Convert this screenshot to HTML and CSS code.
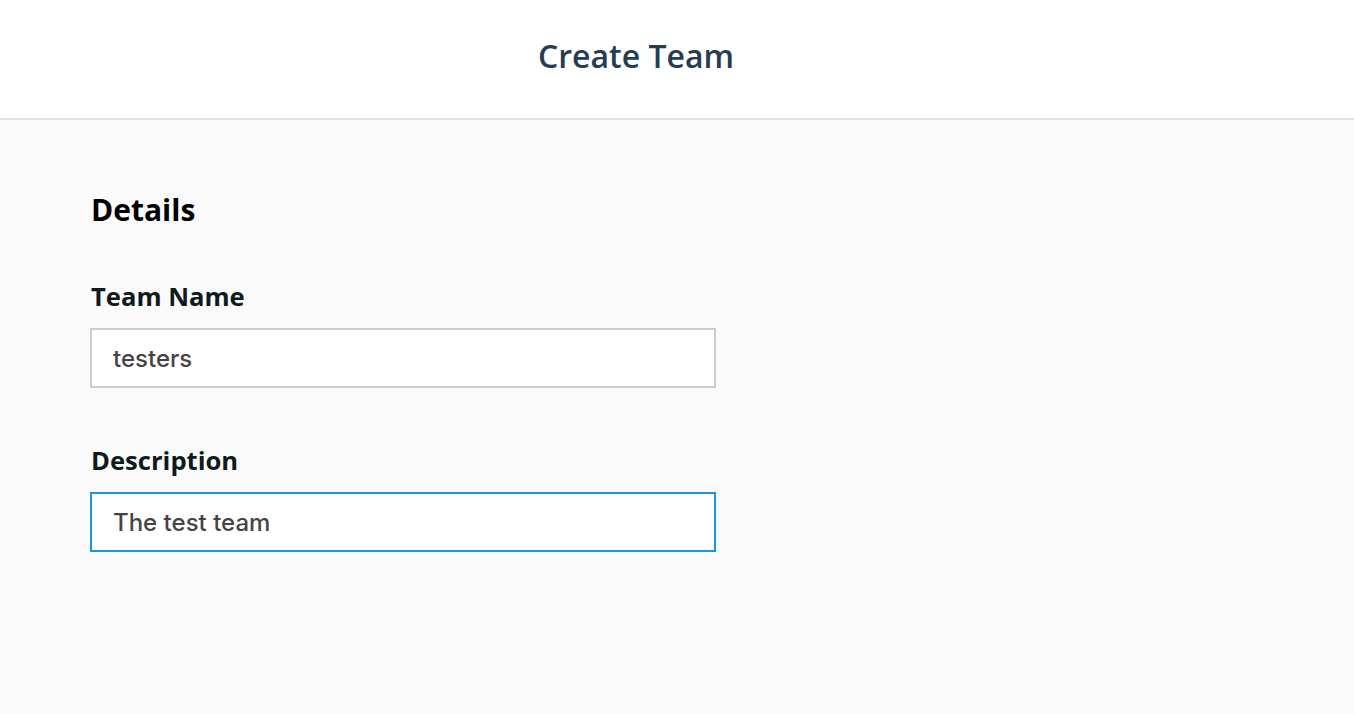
FILE: index.html
```html
<!DOCTYPE html>
<html>
<head>
<meta charset="utf-8">
<link rel="stylesheet" href="styles.css">
</head>
<body>
<header class="topbar">
  <h1 class="title">Create Team</h1>
</header>
<main class="content">
  <h2 class="section-title">Details</h2>
  <div class="field">
    <label class="label">Team Name</label>
    <div class="input">testers</div>
  </div>
  <div class="field">
    <label class="label">Description</label>
    <div class="input input-focus">The test team</div>
  </div>
</main>
</body>
</html>
```

FILE: styles.css
```css
html, body {
  margin: 0;
  padding: 0;
  height: 100%;
}
body {
  background: #fafafa;
  font-family: "Open Sans", sans-serif;
}
.topbar {
  height: 118px;
  background: #ffffff;
  border-bottom: 2px solid #e2e2e4;
  display: flex;
  align-items: center;
  justify-content: center;
  padding-right: 82px;
}
.title {
  margin: 0;
  font-size: 32px;
  font-weight: 600;
  color: #263c52;
  line-height: 40px;
  padding-bottom: 6px;
}
.content {
  padding: 0 90px;
  display: flex;
  flex-direction: column;
}
.section-title {
  margin: 70px 0 0 1px;
  font-size: 30px;
  font-weight: 700;
  color: #000;
  line-height: 40px;
}
.field {
  display: flex;
  flex-direction: column;
  margin-top: 49px;
}
.field + .field {
  margin-top: 55px;
}
.label {
  font-size: 25.6px;
  font-weight: 700;
  color: #0f1a1e;
  line-height: 36px;
  margin-left: 1px;
}
.input {
  margin-top: 13px;
  width: 601px;
  height: 56px;
  border: 2px solid #cccccc;
  background: #ffffff;
  font-family: Inter, "Liberation Sans", sans-serif;
  font-size: 24px;
  font-weight: 500;
  color: #474345;
  display: flex;
  align-items: center;
  padding-left: 21px;
  box-sizing: content-box;
}
.input-focus {
  border-color: #1a97d9;
}
```
